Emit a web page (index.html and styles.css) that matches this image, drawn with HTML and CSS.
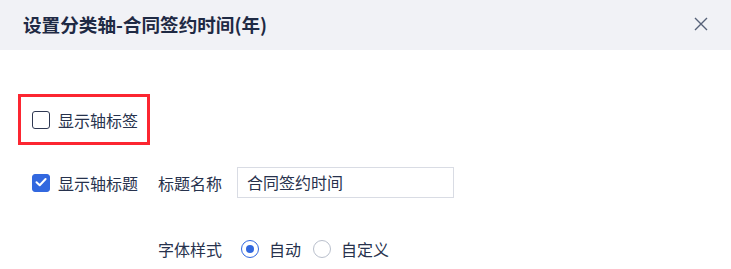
FILE: index.html
```html
<!DOCTYPE html>
<html lang="zh">
<head>
<meta charset="utf-8">
<link rel="stylesheet" href="styles.css">
</head>
<body>
<div class="dialog">
  <div class="header">
    <span class="title">设置分类轴-合同签约时间(年)</span>
    <svg class="close" width="14" height="14" viewBox="0 0 14 14"><path d="M1 1L13 13M13 1L1 13" stroke="#566178" stroke-width="1.4" fill="none"/></svg>
  </div>
  <div class="content">
    <div class="highlight">
      <span class="checkbox"></span>
      <span class="text">显示轴标签</span>
    </div>
    <div class="row">
      <div class="check-item">
        <span class="checkbox checked"><svg width="18" height="18" viewBox="0 0 18 18"><path d="M4.5 9.2L7.7 12.3L13.6 6" stroke="#fff" stroke-width="2" fill="none" stroke-linecap="round" stroke-linejoin="round"/></svg></span>
        <span class="text">显示轴标题</span>
      </div>
      <span class="label">标题名称</span>
      <div class="input">合同签约时间</div>
    </div>
    <div class="row row-font">
      <span class="label">字体样式</span>
      <span class="radio on"></span><span class="text">自动</span>
      <span class="radio"></span><span class="text">自定义</span>
    </div>
  </div>
</div>
</body>
</html>
```
FILE: styles.css
```css
html, body { margin: 0; padding: 0; background: #fff; }
body { font-family: "Noto Sans CJK SC", "Noto Sans", sans-serif; color: #27324d; }
.dialog { width: 731px; height: 269px; overflow: hidden; }
.header {
  height: 50px; background: #f1f2f6; display: flex; align-items: center;
  justify-content: space-between; padding: 0 23px 3px 23px; box-sizing: border-box;
}
.title { font-size: 18.6px; font-weight: 700; color: #1f2a44; }
.close { display: block; }
.content { padding-top: 44px; }
.highlight {
  margin-left: 18px; width: 132px; height: 51px; box-sizing: border-box;
  border: 3px solid #fc2631; display: flex; align-items: center; padding-left: 11px; gap: 8px;
}
.text { font-size: 16px; line-height: 20px; }
.checkbox {
  width: 18px; height: 18px; box-sizing: border-box; border: 1.5px solid #2e3852;
  border-radius: 3px; display: inline-block; flex: none;
}
.checkbox.checked { background: #3268df; border-color: #3268df; position: relative; }
.checkbox.checked svg { position: absolute; left: -1.5px; top: -1.5px; }
.row { display: flex; align-items: center; }
.row:nth-child(2) { margin-top: 22px; height: 31px; }
.check-item { display: flex; align-items: center; gap: 8px; margin-left: 32px; width: 126px; }
.label { font-size: 16px; line-height: 20px; margin-right: 15px; }
.input {
  width: 217px; height: 31px; box-sizing: border-box; border: 1px solid #d9dce4;
  font-size: 16px; line-height: 29px; padding-left: 9px;
}
.row-font { margin-top: 41px; padding-left: 158px; }
.row-font .label { margin-right: 19px; }
.radio {
  width: 18px; height: 18px; box-sizing: border-box; border: 1.5px solid #b9bfcc;
  border-radius: 50%; display: inline-block; flex: none; margin-right: 10px;
}
.radio.on { border-color: #3268df; position: relative; }
.radio.on::after {
  content: ""; position: absolute; left: 3.5px; top: 3.5px; width: 8px; height: 8px;
  border-radius: 50%; background: #3268df;
}
.row-font .text + .radio { margin-left: 12px; }
```
